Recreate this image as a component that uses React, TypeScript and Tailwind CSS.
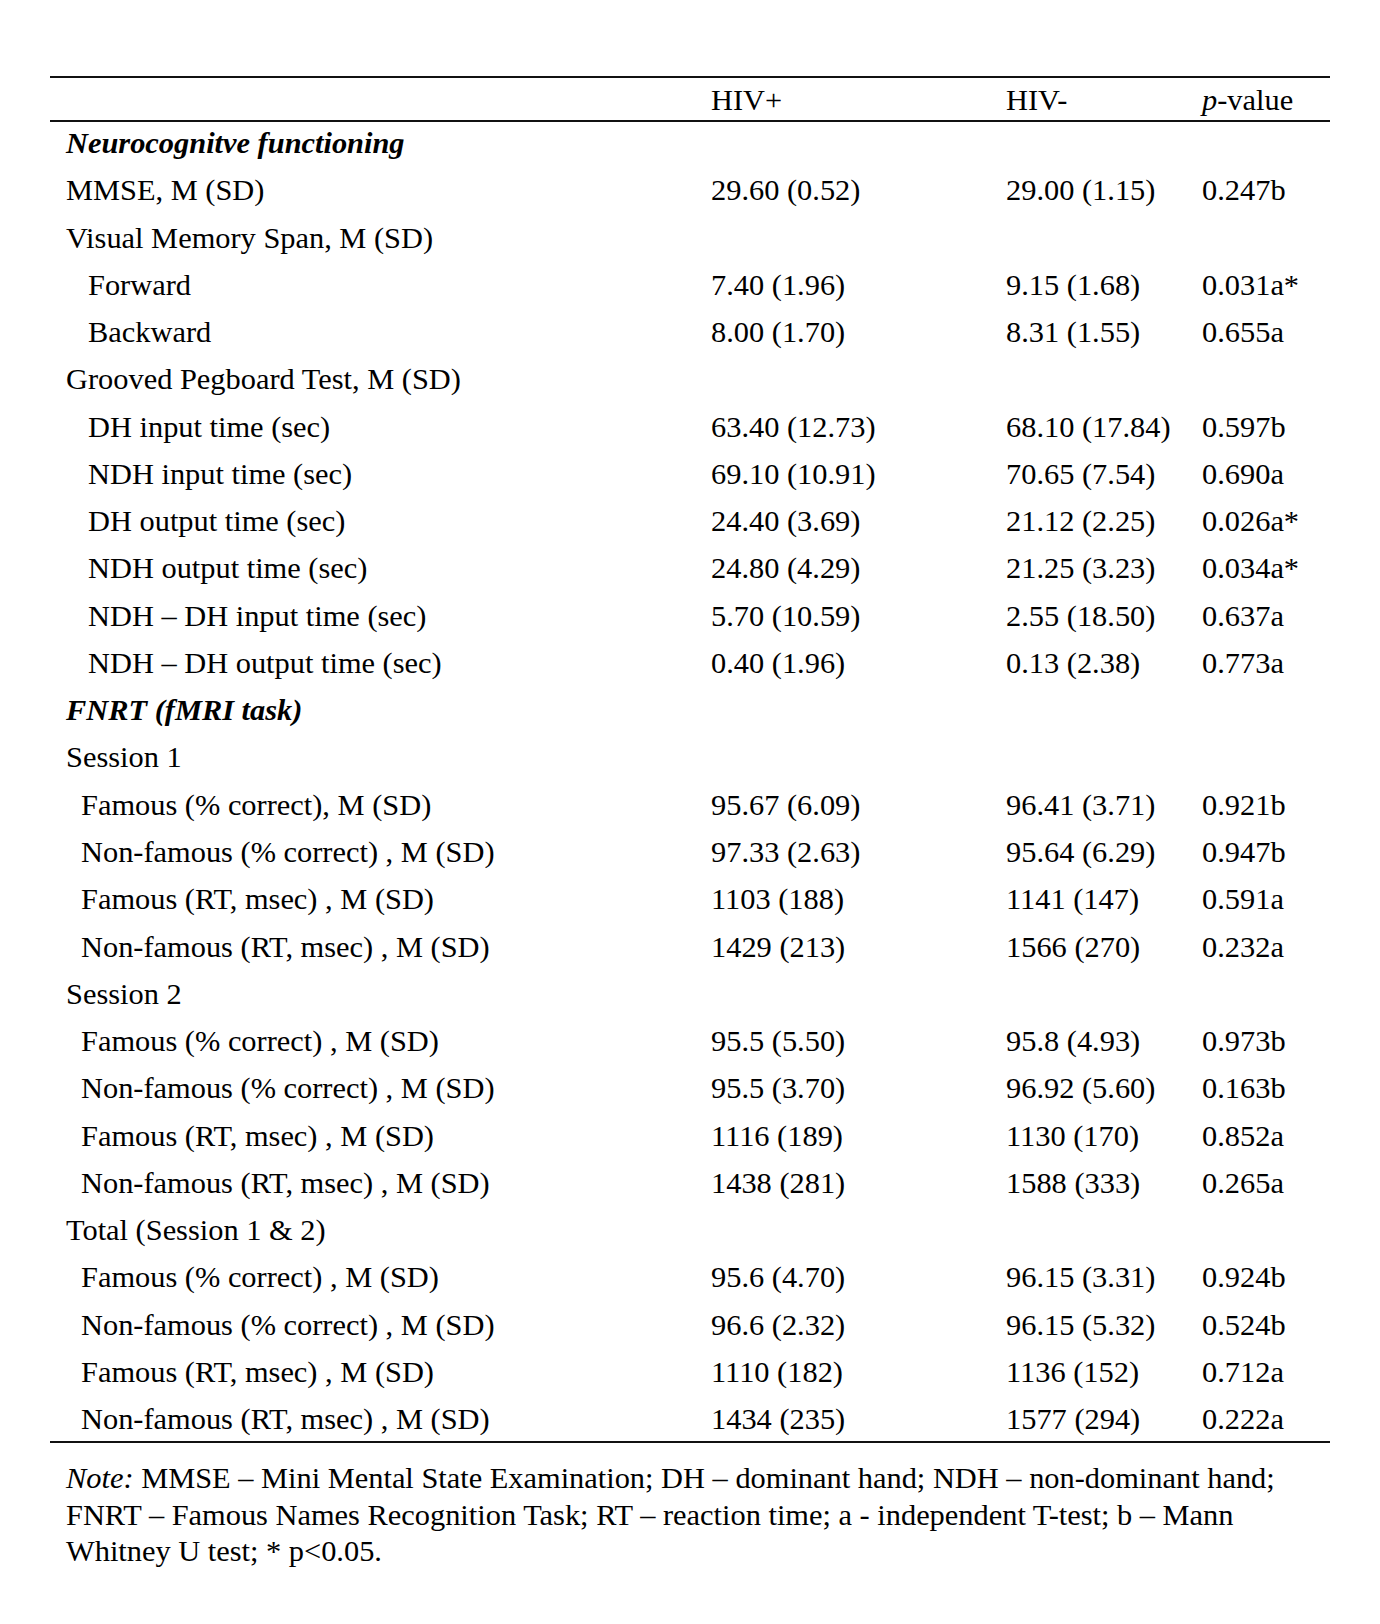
import React from 'react';

type Row = {
  label: string;
  indent?: 0 | 1 | 2;
  heading?: boolean;
  hivPos?: string;
  hivNeg?: string;
  p?: string;
};

const rows: Row[] = [
  { label: 'Neurocognitve functioning', heading: true },
  { label: 'MMSE, M (SD)', hivPos: '29.60 (0.52)', hivNeg: '29.00 (1.15)', p: '0.247b' },
  { label: 'Visual Memory Span, M (SD)' },
  { label: 'Forward', indent: 2, hivPos: '7.40 (1.96)', hivNeg: '9.15 (1.68)', p: '0.031a*' },
  { label: 'Backward', indent: 2, hivPos: '8.00 (1.70)', hivNeg: '8.31 (1.55)', p: '0.655a' },
  { label: 'Grooved Pegboard Test, M (SD)' },
  { label: 'DH input time (sec)', indent: 2, hivPos: '63.40 (12.73)', hivNeg: '68.10 (17.84)', p: '0.597b' },
  { label: 'NDH input time (sec)', indent: 2, hivPos: '69.10 (10.91)', hivNeg: '70.65 (7.54)', p: '0.690a' },
  { label: 'DH output time (sec)', indent: 2, hivPos: '24.40 (3.69)', hivNeg: '21.12 (2.25)', p: '0.026a*' },
  { label: 'NDH output time (sec)', indent: 2, hivPos: '24.80 (4.29)', hivNeg: '21.25 (3.23)', p: '0.034a*' },
  { label: 'NDH \u2013 DH input time (sec)', indent: 2, hivPos: '5.70 (10.59)', hivNeg: '2.55 (18.50)', p: '0.637a' },
  { label: 'NDH \u2013 DH output time (sec)', indent: 2, hivPos: '0.40 (1.96)', hivNeg: '0.13 (2.38)', p: '0.773a' },
  { label: 'FNRT (fMRI task)', heading: true },
  { label: 'Session 1' },
  { label: 'Famous (% correct), M (SD)', indent: 1, hivPos: '95.67 (6.09)', hivNeg: '96.41 (3.71)', p: '0.921b' },
  { label: 'Non-famous (% correct) , M (SD)', indent: 1, hivPos: '97.33 (2.63)', hivNeg: '95.64 (6.29)', p: '0.947b' },
  { label: 'Famous (RT, msec) , M (SD)', indent: 1, hivPos: '1103 (188)', hivNeg: '1141 (147)', p: '0.591a' },
  { label: 'Non-famous (RT, msec) , M (SD)', indent: 1, hivPos: '1429 (213)', hivNeg: '1566 (270)', p: '0.232a' },
  { label: 'Session 2' },
  { label: 'Famous (% correct) , M (SD)', indent: 1, hivPos: '95.5 (5.50)', hivNeg: '95.8 (4.93)', p: '0.973b' },
  { label: 'Non-famous (% correct) , M (SD)', indent: 1, hivPos: '95.5 (3.70)', hivNeg: '96.92 (5.60)', p: '0.163b' },
  { label: 'Famous (RT, msec) , M (SD)', indent: 1, hivPos: '1116 (189)', hivNeg: '1130 (170)', p: '0.852a' },
  { label: 'Non-famous (RT, msec) , M (SD)', indent: 1, hivPos: '1438 (281)', hivNeg: '1588 (333)', p: '0.265a' },
  { label: 'Total (Session 1 & 2)' },
  { label: 'Famous (% correct) , M (SD)', indent: 1, hivPos: '95.6 (4.70)', hivNeg: '96.15 (3.31)', p: '0.924b' },
  { label: 'Non-famous (% correct) , M (SD)', indent: 1, hivPos: '96.6 (2.32)', hivNeg: '96.15 (5.32)', p: '0.524b' },
  { label: 'Famous (RT, msec) , M (SD)', indent: 1, hivPos: '1110 (182)', hivNeg: '1136 (152)', p: '0.712a' },
  { label: 'Non-famous (RT, msec) , M (SD)', indent: 1, hivPos: '1434 (235)', hivNeg: '1577 (294)', p: '0.222a' },
];

const cols = 'grid grid-cols-[645px_295px_196px_1fr] pl-[16px]';

const App: React.FC = () => {
  return (
    <div className="min-h-[1624px] w-[1380px] bg-white pt-[76px] pl-[50px] font-['Liberation_Serif','Times_New_Roman',serif] text-[30.4px] text-black">
      <div className="w-[1280px]">
        {/* header */}
        <div className={`${cols} h-[46px] border-y-2 border-[#111] pt-[3px] leading-[38px]`}>
          <div />
          <div>HIV+</div>
          <div>HIV-</div>
          <div>
            <i>p</i>-value
          </div>
        </div>

        {/* body */}
        <div className="border-b-2 border-[#111]">
          {rows.map((r, i) => {
            const last = i === rows.length - 1;
            const pad = r.indent === 2 ? 'pl-[22px]' : r.indent === 1 ? 'pl-[15px]' : '';
            return (
              <div
                key={i}
                className={`${cols} ${last ? 'h-[43px]' : 'h-[47.28px]'} leading-[42px] whitespace-nowrap`}
              >
                <div className={`${pad} ${r.heading ? 'font-bold italic' : ''}`}>{r.label}</div>
                <div>{r.hivPos}</div>
                <div>{r.hivNeg}</div>
                <div>{r.p}</div>
              </div>
            );
          })}
        </div>

        {/* note */}
        <p className="pl-[16px] pt-[17px] leading-[36.5px]">
          <i>Note:</i> MMSE &ndash; Mini Mental State Examination; DH &ndash; dominant hand; NDH &ndash; non-dominant hand;
          <br />
          FNRT &ndash; Famous Names Recognition Task; RT &ndash; reaction time; a - independent T-test; b &ndash; Mann
          <br />
          Whitney U test; * p&lt;0.05.
        </p>
      </div>
    </div>
  );
};

export default App;
